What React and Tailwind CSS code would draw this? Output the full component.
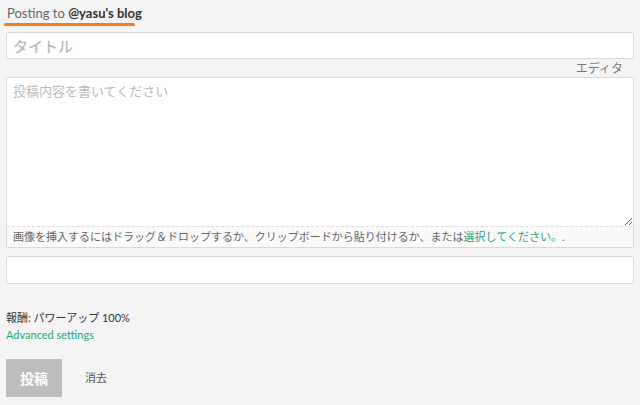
export default function App() {
  return (
    <div
      className="min-h-[405px] w-[640px] bg-[#f4f4f4] px-[6px] pt-0 text-[#333]"
      style={{ fontFamily: 'Lato, "Noto Sans CJK JP", sans-serif' }}
    >
      <div className="inline-block">
        <div className="px-[1px] pt-[1px] text-[13px] leading-[18px] text-[#666]">
          Posting to <span className="font-bold text-[#333]">@yasu's blog</span>
        </div>
        <div className="-ml-[2px] mt-[1px] h-[3px] w-[131px] rounded-full bg-[#f47b20]" />
      </div>

      <input
        className="mt-[6px] block h-[27px] w-full rounded-[2px] border border-[#d9d9d9] bg-white px-[6px] text-[15px] font-medium outline-none placeholder:text-[#bbb]"
        placeholder="タイトル"
      />

      <div className="flex justify-end pr-[11px] pt-[1px] text-[12px] leading-[17px] text-[#777]">
        エディタ
      </div>

      <div className="rounded-[2px] border border-[#d9d9d9] bg-white">
        <textarea
          className="block h-[148px] w-full resize-y bg-white px-[6px] pt-[4px] text-[13px] outline-none placeholder:text-[#bbb]"
          placeholder="投稿内容を書いてください"
        />
        <div className="border-t border-dashed border-[#ddd] bg-[#fafafa] px-[6px] py-[2px] text-[11px] leading-[16px] text-[#666]">
          画像を挿入するにはドラッグ＆ドロップするか、クリップボードから貼り付けるか、または
          <span className="text-[#1fa67a]">選択してください。</span>.
        </div>
      </div>

      <input className="mt-[8px] block h-[28px] w-full rounded-[2px] border border-[#d9d9d9] bg-white px-[6px] outline-none" />

      <div className="mt-[26px] text-[11px] leading-[16px] text-[#333]">報酬: パワーアップ 100%</div>
      <div className="mt-[1px] text-[11px] leading-[16px] text-[#1fa67a]">Advanced settings</div>

      <div className="mt-[16px] flex items-center">
        <button className="h-[38px] w-[56px] bg-[#bdbdbd] text-[14px] font-bold text-white">投稿</button>
        <button className="ml-[20px] px-[3px] text-[11px] text-[#555]">消去</button>
      </div>
    </div>
  );
}
